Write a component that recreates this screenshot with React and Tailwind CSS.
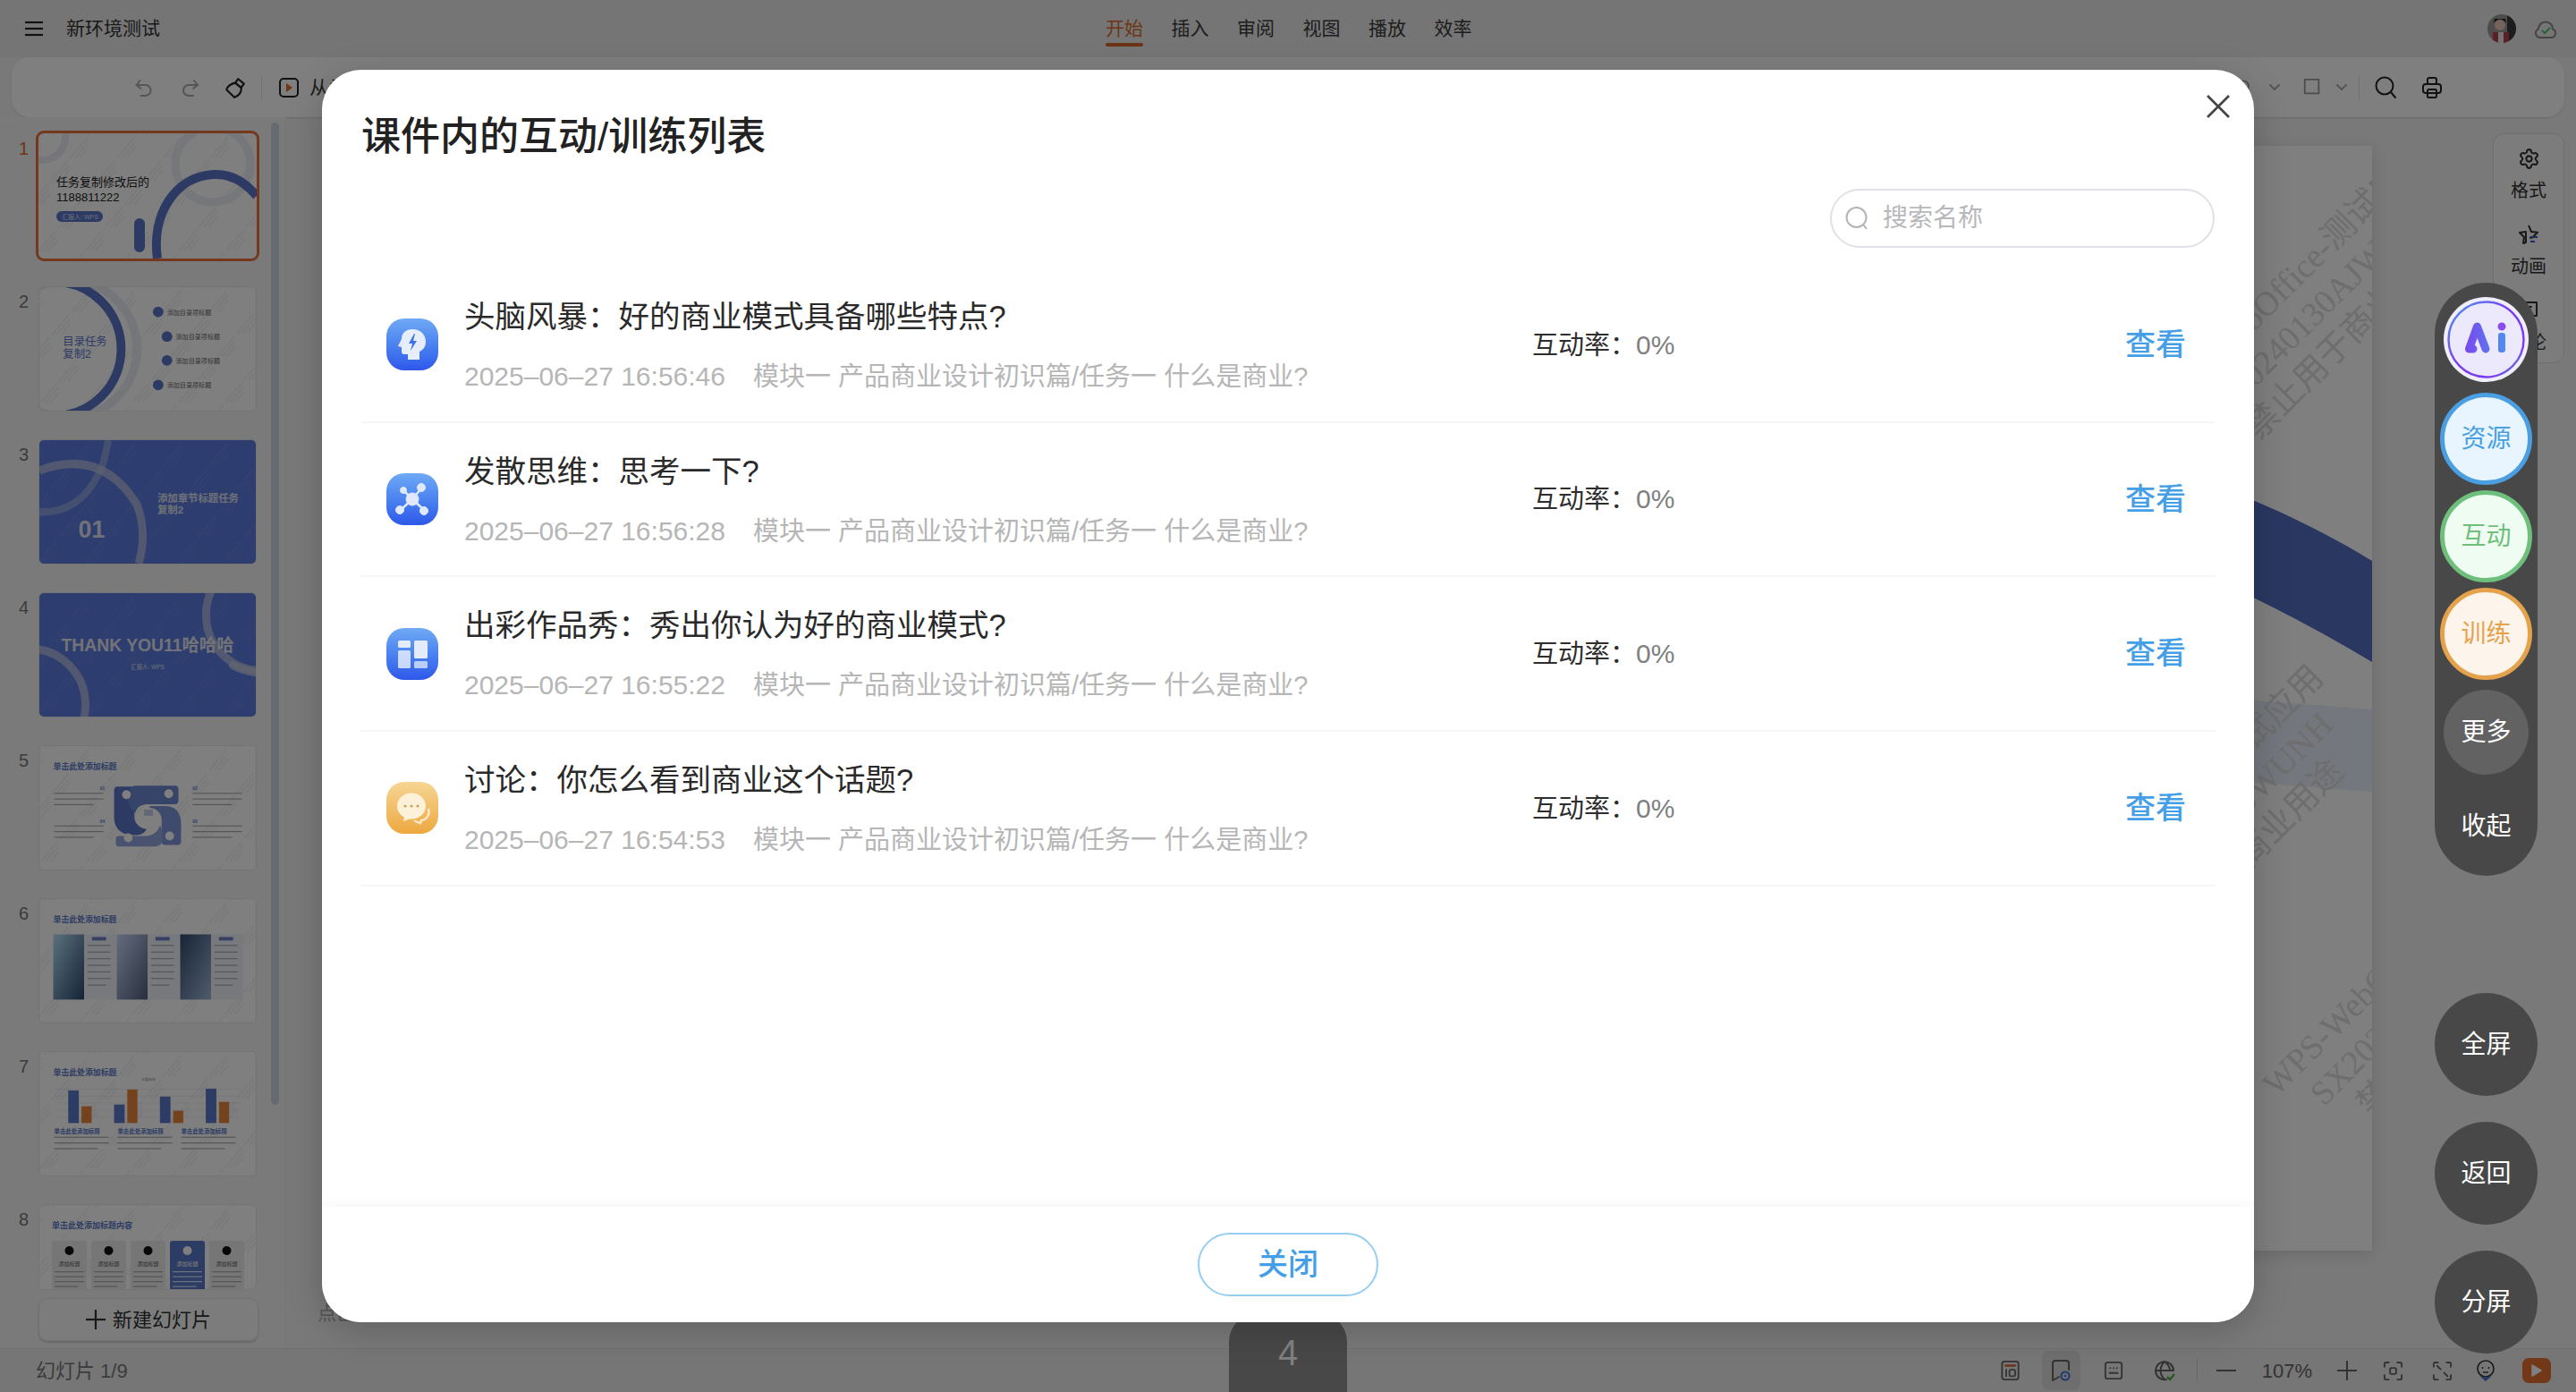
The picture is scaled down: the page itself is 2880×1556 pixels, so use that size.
import React from "react";
import { Settings } from "lucide-react";

const FONT = "font-['Liberation_Sans','Noto_Sans_CJK_SC',sans-serif]";
const SERIF = "font-['Liberation_Serif','Noto_Sans_CJK_SC',serif]";

/* ---------- Thumbnails ---------- */
function Wm({ id, color = "#dcdee6" }) {
  return (
    <>
      <defs>
        <pattern id={id} width="34" height="40" patternUnits="userSpaceOnUse" patternTransform="rotate(-50)">
          <g stroke={color} strokeWidth="1" strokeDasharray="1.4 .7">
            <line x1="1" y1="5" x2="31" y2="5" />
            <line x1="5" y1="9" x2="27" y2="9" />
            <line x1="8" y1="13" x2="24" y2="13" />
          </g>
        </pattern>
      </defs>
      <rect width="244" height="140" fill={`url(#${id})`} />
    </>
  );
}

const CN = "'Liberation Sans','Noto Sans CJK SC',sans-serif";

function Lines({ x, y, w, n, gap = 5, color = "#aaa", h = 1.2 }) {
  return (
    <g fill={color}>
      {Array.from({ length: n }).map((_, i) => (
        <rect key={i} x={x} y={y + i * gap} width={i === n - 1 ? w * 0.8 : w} height={h} />
      ))}
    </g>
  );
}

function Title({ text }) {
  return (
    <text x="15" y="26" fontSize="9" fontWeight="700" fill="#5a78c8" fontFamily={CN}>{text}</text>
  );
}

function S1() {
  return (
    <svg viewBox="0 0 244 140" className="block w-full h-full">
      <rect width="244" height="140" fill="#fff" />
      <Wm id="w1" />
      <circle cx="4" cy="4" r="26" fill="none" stroke="#ebedf3" strokeWidth="8" />
      <circle cx="195" cy="35" r="42" fill="none" stroke="#eceef4" strokeWidth="9" />
      <path d="M133 140 C126 92 152 48 196 46 C218 45 234 58 244 70" fill="none" stroke="#5a76c9" strokeWidth="10" />
      <rect x="107" y="95" width="12" height="38" rx="6" fill="#5a76c9" />
      <text x="20" y="59" fontSize="13" fill="#222" fontFamily={CN}>任务复制修改后的</text>
      <text x="20" y="76" fontSize="13" fill="#222" fontFamily={CN}>1188811222</text>
      <rect x="20" y="87" width="52" height="12" rx="6" fill="#5a76c9" />
      <text x="26" y="96" fontSize="7" fill="#d8def0" fontFamily={CN}>汇报人: WPS</text>
    </svg>
  );
}

function S2() {
  const items = [[134, 28], [144, 56], [144, 83], [134, 111]];
  return (
    <svg viewBox="0 0 244 140" className="block w-full h-full">
      <rect width="244" height="140" fill="#fff" />
      <Wm id="w2" />
      <circle cx="32" cy="70" r="78" fill="none" stroke="#ebedf3" strokeWidth="10" />
      <circle cx="16" cy="70" r="76" fill="none" stroke="#5a76c9" strokeWidth="10" />
      <text x="26" y="66" fontSize="12.5" fill="#5a76c9" fontFamily={CN}>目录任务</text>
      <text x="26" y="80" fontSize="12.5" fill="#5a76c9" fontFamily={CN}>复制2</text>
      {items.map(([x, y], i) => (
        <g key={i}>
          <circle cx={x} cy={y} r="6" fill="#5a76c9" />
          <text x={x + 10} y={y + 3} fontSize="7.2" fill="#666" fontFamily={CN}>添加目录项标题</text>
        </g>
      ))}
    </svg>
  );
}

function S3() {
  return (
    <svg viewBox="0 0 244 134" className="block w-full h-full" preserveAspectRatio="none">
      <rect width="244" height="134" fill="#5c7ade" />
      <Wm id="w3" color="#6f8be2" />
      <path d="M0 78 Q50 80 72 25 L78 0" fill="none" stroke="#aab6dd" strokeWidth="8" opacity=".6" />
      <path d="M0 33 Q70 8 110 70 Q122 100 112 134" fill="none" stroke="#c0c8e0" strokeWidth="9" opacity=".7" />
      <text x="44" y="106" fontSize="27" fontWeight="700" fill="#e2e5ee" fontFamily={CN}>01</text>
      <text x="133" y="67" fontSize="11.5" fontWeight="700" fill="#dfe3ee" fontFamily={CN}>添加章节标题任务</text>
      <text x="133" y="80" fontSize="11.5" fontWeight="700" fill="#dfe3ee" fontFamily={CN}>复制2</text>
    </svg>
  );
}

function S4() {
  return (
    <svg viewBox="0 0 244 137" className="block w-full h-full" preserveAspectRatio="none">
      <rect width="244" height="137" fill="#5c7ade" />
      <Wm id="w4" color="#6f8be2" />
      <circle cx="-10" cy="124" r="62" fill="none" stroke="#c0c8e0" strokeWidth="9" opacity=".7" />
      <circle cx="250" cy="24" r="62" fill="none" stroke="#c0c8e0" strokeWidth="9" opacity=".7" />
      <path d="M218 80 Q230 86 244 88" stroke="#c0c8e0" strokeWidth="9" fill="none" strokeLinecap="round" opacity=".8" />
      <text x="122" y="65" textAnchor="middle" fontSize="19.5" fontWeight="700" fill="#e4e6ee" fontFamily={CN}>THANK YOU11哈哈哈</text>
      <text x="122" y="84" textAnchor="middle" fontSize="6.5" fill="#dfe3ee" fontFamily={CN}>汇报人: WPS</text>
    </svg>
  );
}

function S5() {
  return (
    <svg viewBox="0 0 244 140" className="block w-full h-full">
      <rect width="244" height="140" fill="#fff" />
      <Wm id="w5" />
      <Title text="单击此处添加标题" />
      <text x="68" y="50" fontSize="5" fill="#5a76c9" fontWeight="700">01</text>
      <text x="173" y="50" fontSize="5" fill="#5a76c9" fontWeight="700">02</text>
      <text x="68" y="87" fontSize="5" fill="#5a76c9" fontWeight="700">04</text>
      <text x="173" y="87" fontSize="5" fill="#5a76c9" fontWeight="700">03</text>
      <Lines x={16} y={53} w={56} n={3} gap={6.4} />
      <Lines x={16} y={90} w={56} n={3} gap={6.4} />
      <Lines x={173} y={53} w={56} n={3} gap={6.4} />
      <Lines x={173} y={90} w={56} n={3} gap={6.4} />
      <path d="M88 46 h15 a4 4 0 0 1 4 4 v30 a14 14 0 0 0 14 14 c-4 7 -10 7 -16 7 c-14 0 -21 -9 -21 -20 v-31 a4 4 0 0 1 4 -4z" fill="#5a76c9" />
      <path d="M108 45 h45 a4 4 0 0 1 4 4 v13 a4 4 0 0 1 -4 4 h-30 c-7 0 -13 2 -15 10 c-6 -6 -9 -14 -8 -20 c1 -7 4 -11 8 -11z" fill="#6f88d2" />
      <path d="M125 68 h17 c15 0 18 12 18 20 v20 a4 4 0 0 1 -4 4 h-14 a4 4 0 0 1 -4 -4 v-24 a14 14 0 0 0 -14 -14z" fill="#7f96d8" />
      <path d="M90 102 h28 c10 0 15 -4 18 -12 c4 8 4 14 2 20 c-3 4 -8 4 -14 4 h-34 a4 4 0 0 1 -4 -4 v-4 a4 4 0 0 1 4 -4z" fill="#92a6de" />
      <circle cx="98" cy="55" r="5" fill="#fff" /><circle cx="146" cy="54" r="5" fill="#fff" />
      <circle cx="100" cy="104" r="5" fill="#fff" /><circle cx="147" cy="102" r="5" fill="#fff" />
      <rect x="118" y="72" width="10" height="7" fill="#c4d0ee" />
    </svg>
  );
}

function S6() {
  const col = (x, a, b) => (
    <g>
      <linearGradient id={`g${x}`} x1="0" y1="0" x2="1" y2="1">
        <stop offset="0" stopColor={a} /><stop offset="1" stopColor={b} />
      </linearGradient>
      <rect x={x} y="40" width="35" height="74" fill={`url(#g${x})`} />
      <rect x={x + 35} y="40" width="36" height="74" fill="#eef2fa" />
      <rect x={x + 44} y="43" width="16" height="4" fill="#6a80c8" />
      <Lines x={x + 39} y={52} w={26} n={7} gap={7.5} />
    </g>
  );
  return (
    <svg viewBox="0 0 244 140" className="block w-full h-full">
      <rect width="244" height="140" fill="#fff" />
      <Wm id="w6" />
      <Title text="单击此处添加标题" />
      {col(15, "#b8e0f8", "#26486e")}
      {col(87, "#c8d8fa", "#506080")}
      {col(159, "#304a6e", "#a0b8d8")}
    </svg>
  );
}

function S7() {
  const bars = [[32, 37, 19], [84, 21, 38], [136, 30, 14], [188, 39, 24]];
  return (
    <svg viewBox="0 0 244 140" className="block w-full h-full">
      <rect width="244" height="140" fill="#fff" />
      <Wm id="w7" />
      <Title text="单击此处添加标题" />
      <g stroke="#e8e8e8" strokeWidth=".6">
        {[42, 50, 58, 66, 74].map((y) => <line key={y} x1="18" y1={y} x2="228" y2={y} />)}
      </g>
      {bars.map(([x, a, b], i) => (
        <g key={i}>
          <rect x={x} y={68.5 - a + 12} width="12" height={a} fill="#5a78c8" />
          <rect x={x + 15} y={68.5 - b + 12} width="11.5" height={b} fill="#e8843a" />
        </g>
      ))}
      <text x="115" y="32" fontSize="4" fill="#888" fontFamily={CN}>主要标题</text>
      {[16, 88, 160].map((x) => (
        <g key={x}>
          <text x={x} y="92" fontSize="6.5" fontWeight="700" fill="#5a78c8" fontFamily={CN}>单击此处添加标题</text>
          <Lines x={x} y={96} w={62} n={3} gap={6.5} />
        </g>
      ))}
    </svg>
  );
}

function S8() {
  return (
    <svg viewBox="0 0 244 96" className="block w-full" style={{ height: 96 }} preserveAspectRatio="xMidYMin slice">
      <rect width="244" height="96" fill="#fff" />
      <Wm id="w8" />
      <Title text="单击此处添加标题内容" />
      {[15, 59, 103, 147, 191].map((x, i) => (
        <g key={x}>
          <rect x={x} y="40" width="39" height="60" rx="3" fill={i === 3 ? "#5a78c8" : "#ececee"} />
          <circle cx={x + 19.5} cy="51" r="5" fill={i === 3 ? "#fff" : "#111"} />
          <text x={x + 19.5} y="68" textAnchor="middle" fontSize="6" fill={i === 3 ? "#fff" : "#555"} fontFamily={CN}>添加标题</text>
          <Lines x={x + 3} y={74} w={33} n={4} gap={5.5} color={i === 3 ? "#dfe6f8" : "#aaa"} />
        </g>
      ))}
    </svg>
  );
}

function Thumb({ n, active, h = "h-[140px]", children }) {
  return (
    <div className="flex items-start shrink-0">
      <div className={`w-[32px] pt-[5px] text-right text-[20px] leading-[24px] ${active ? "text-[#e0682c]" : "text-[#777]"}`}>{n}</div>
      <div className={`ml-[11px] w-[244px] ${h} overflow-hidden rounded-[6px] ${active ? "outline-[3px] outline-[#e8703a]" : "border border-[#e8e8e8]"}`}>
        {children}
      </div>
    </div>
  );
}

/* ---------- Small icons ---------- */
const Ico = ({ w = 24, h = 24, vb = "0 0 24 24", c = "#555", sw = 2, children, className = "" }) => (
  <svg width={w} height={h} viewBox={vb} fill="none" stroke={c} strokeWidth={sw} strokeLinecap="round" strokeLinejoin="round" className={`shrink-0 ${className}`}>
    {children}
  </svg>
);

function ListIcon({ kind }) {
  const orange = kind === "chat";
  return (
    <div className={`w-[58px] h-[58px] shrink-0 rounded-[20px] ${orange ? "bg-gradient-to-b from-[#f6d592] to-[#eda83c]" : "bg-gradient-to-b from-[#6fa9f5] to-[#2f57ea]"}`}>
      <svg width="58" height="58" viewBox="0 0 58 58">
        {kind === "brain" && (
          <g>
            <path d="M29 12 c9 0 15 6 15 14 c0 6 -3 9 -7 11 v9 h-13 v-6 h-4 c-2 0 -3 -1 -3 -3 v-5 l-4 -1 l4 -8 c0 -7 5 -11 12 -11z" fill="#e6eefc" />
            <path d="M31 17 l-6 11 h4 l-2 8 l7 -11 h-4 l2 -8z" fill="#3f73ea" />
          </g>
        )}
        {kind === "net" && (
          <g fill="#dfe9fb" stroke="#dfe9fb">
            <line x1="29" y1="29" x2="19" y2="19" strokeWidth="2.5" />
            <line x1="29" y1="29" x2="39" y2="17" strokeWidth="2.5" />
            <line x1="29" y1="29" x2="16" y2="41" strokeWidth="2.5" />
            <line x1="29" y1="29" x2="42" y2="41" strokeWidth="2.5" />
            <circle cx="29" cy="29" r="7" />
            <circle cx="19" cy="19" r="3.5" />
            <circle cx="39" cy="16" r="4.5" />
            <circle cx="15" cy="41" r="4.5" />
            <circle cx="42" cy="42" r="4.5" />
          </g>
        )}
        {kind === "grid" && (
          <g fill="#e4ecfb">
            <rect x="13" y="14" width="14" height="8" rx="1.5" />
            <rect x="13" y="25" width="14" height="20" rx="1.5" opacity=".85" />
            <rect x="31" y="14" width="15" height="20" rx="1.5" />
            <rect x="31" y="37" width="15" height="8" rx="1.5" opacity=".75" />
          </g>
        )}
        {kind === "chat" && (
          <g>
            <path d="M47 30 c2 5 -1 12 -8 13 l-1 3 c-3 -1 -5 -1 -7 -3" fill="none" stroke="#fbeac8" strokeWidth="2.4" />
            <ellipse cx="28" cy="27" rx="16" ry="14.5" fill="#fdf1da" />
            <path d="M20 38 l-1 6 l8 -3z" fill="#fdf1da" />
            <g fill="#c9a261"><circle cx="21" cy="27" r="1.6" /><circle cx="28" cy="27" r="1.6" /><circle cx="35" cy="27" r="1.6" /></g>
          </g>
        )}
      </svg>
    </div>
  );
}

const ROWS = [
  ["brain", "头脑风暴：好的商业模式具备哪些特点?", "2025–06–27 16:56:46"],
  ["net", "发散思维：思考一下?", "2025–06–27 16:56:28"],
  ["grid", "出彩作品秀：秀出你认为好的商业模式?", "2025–06–27 16:55:22"],
  ["chat", "讨论：你怎么看到商业这个话题?", "2025–06–27 16:54:53"],
];

function Round({ border, bg, text, children }) {
  return (
    <div className={`w-[103px] h-[103px] rounded-full border-[5px] flex items-center justify-center text-[28px] shrink-0 ${border} ${bg} ${text}`}>
      {children}
    </div>
  );
}

function Dark({ children }) {
  return (
    <div className="w-[115px] h-[115px] rounded-full bg-[#484848] text-white text-[28px] flex items-center justify-center">
      {children}
    </div>
  );
}

function Watermark({ left, top }) {
  return (
    <div className={`absolute ${left} ${top} -translate-x-1/2 -translate-y-1/2 -rotate-45 text-center text-[38px] leading-[45px] text-[#dcdcdc] whitespace-nowrap ${SERIF}`}>
      <div>WPS-WebOffice-测试应用</div>
      <div>SX20240130AJWUNH</div>
      <div>禁止用于商业用途</div>
    </div>
  );
}

export default function App() {
  return (
    <div className={`relative w-[2880px] h-[1556px] overflow-hidden flex flex-col bg-[#f2f2f2] ${FONT}`}>
      {/* top bar */}
      <header className="relative h-[64px] shrink-0 bg-[#ebebeb] flex items-center">
        <svg width="20" height="18" viewBox="0 0 20 18" className="ml-[28px] shrink-0" stroke="#222" strokeWidth="2.2">
          <line x1="0" y1="2" x2="20" y2="2" /><line x1="0" y1="9" x2="20" y2="9" /><line x1="0" y1="16" x2="20" y2="16" />
        </svg>
        <span className="ml-[26px] text-[21px] text-[#333]">新环境测试</span>
        <nav className="ml-[1057px] flex gap-[31.5px] text-[21px] text-[#3a3a3a]">
          <span className="relative text-[#dc6a30]">
            开始
            <span className="absolute left-0 right-0 top-[32px] h-[4px] rounded-full bg-[#d8682e]" />
          </span>
          {["插入", "审阅", "视图", "播放", "效率"].map((t) => <span key={t}>{t}</span>)}
        </nav>
        <div className="ml-auto mr-[22px] flex items-center gap-[21px]">
          <svg width="32" height="32" viewBox="0 0 32 32">
            <defs><clipPath id="av"><circle cx="16" cy="16" r="16" /></clipPath></defs>
            <g clipPath="url(#av)">
              <rect width="32" height="32" fill="#9a9a9a" />
              <rect x="22" y="0" width="10" height="32" fill="#3a3a3a" />
              <circle cx="14" cy="12" r="6" fill="#e8c8b8" />
              <path d="M7 10 q7 -9 14 0 l-1 -5 h-12z" fill="#222" />
              <rect x="6" y="20" width="18" height="12" fill="#b8404e" />
              <rect x="12" y="20" width="6" height="12" fill="#e8e8f0" />
            </g>
          </svg>
          <svg width="24" height="22" viewBox="0 0 24 22" fill="none">
            <path d="M6 21 h12 a5 5 0 0 0 2 -9.6 a8 8 0 0 0 -16 0 a5 5 0 0 0 2 9.6z" stroke="#888" strokeWidth="2" />
            <path d="M8 13 l3 3 l6 -6" stroke="#4cc35e" strokeWidth="2" />
          </svg>
        </div>
      </header>

      {/* toolbar */}
      <div className="mx-[13px] h-[67px] shrink-0 rounded-[20px] bg-white shadow-[0_1px_2px_rgba(0,0,0,.12)] flex items-center pl-[135px] pr-[136px]">
        <Ico w={25} h={24} c="#aaa"><path d="M4 9 l4 -5 M4 9 l5 4 M4 9 h10 a6 6 0 0 1 0 12 h-5" /></Ico>
        <Ico w={24} h={24} c="#aaa" className="ml-[28px]"><path d="M20 9 l-4 -5 M20 9 l-5 4 M20 9 h-10 a6 6 0 0 0 0 12 h5" /></Ico>
        <Ico w={26} h={26} c="#222" className="ml-[25px]">
          <path d="M15 3 l6 5 l-3 4 l-6 -5z" />
          <path d="M12 7 l6 5 c1 5 -3 9 -7 10 l-8 -8 c1 -4 5 -6 9 -7z" />
        </Ico>
        <div className="ml-[16px] w-px h-[26px] bg-[#e0e0e0]" />
        <svg width="24" height="24" viewBox="0 0 24 24" className="ml-[18px] shrink-0" fill="none">
          <rect x="2" y="2" width="20" height="20" rx="4" stroke="#222" strokeWidth="2" />
          <path d="M9 7 l7 5 l-7 5z" fill="#e0682c" />
        </svg>
        <span className="ml-[11px] text-[21px] text-[#333]">从头开始</span>
        <div className="ml-auto flex items-center">
          <Ico w={20} h={20} c="#999" sw={2}><circle cx="5" cy="10" r="7" /></Ico>
          <Ico w={12} h={8} vb="0 0 12 8" c="#aaa" className="ml-[13px]"><path d="M1 1 l5 5 l5 -5" /></Ico>
          <Ico w={22} h={22} c="#999" className="ml-[25px]"><rect x="3" y="2" width="17" height="17" /></Ico>
          <Ico w={12} h={8} vb="0 0 12 8" c="#aaa" className="ml-[16px]"><path d="M1 1 l5 5 l5 -5" /></Ico>
          <div className="ml-[13px] w-px h-[26px] bg-[#e0e0e0]" />
          <Ico w={24} h={26} c="#222" sw={2} vb="0 0 24 26" className="ml-[17px]"><circle cx="11" cy="11" r="9.5" /><path d="M18 18 l5 6" /></Ico>
          <Ico w={24} h={26} c="#222" sw={2} vb="0 0 24 26" className="ml-[28px]">
            <rect x="7" y="2" width="10" height="7" rx="2" />
            <rect x="2" y="9" width="20" height="10" rx="3" />
            <rect x="7" y="15" width="10" height="9" rx="1.5" />
          </Ico>
        </div>
      </div>

      {/* main */}
      <div className="flex-1 min-h-0 flex">
        {/* slides panel */}
        <aside className="relative w-[320px] shrink-0 border-r border-[#ebebeb] bg-[#f4f4f4] flex flex-col">
          <div className="h-[1311px] overflow-hidden pt-[18px] flex flex-col gap-[31px]">
            <Thumb n="1" active><S1 /></Thumb>
            <Thumb n="2"><S2 /></Thumb>
            <Thumb n="3"><S3 /></Thumb>
            <Thumb n="4"><S4 /></Thumb>
            <Thumb n="5"><S5 /></Thumb>
            <Thumb n="6"><S6 /></Thumb>
            <Thumb n="7"><S7 /></Thumb>
            <Thumb n="8" h="h-[96px]"><S8 /></Thumb>
          </div>
          <button className="ml-[43px] mt-[9px] w-[246px] h-[48px] rounded-[10px] bg-[#f8f8f8] border border-[#e4e4e4] shadow-[0_2px_2px_rgba(0,0,0,.14)] flex items-center justify-center gap-[8px] text-[22px] text-[#333]">
            <svg width="22" height="22" viewBox="0 0 22 22" stroke="#333" strokeWidth="2.2"><line x1="11" y1="0" x2="11" y2="22" /><line x1="0" y1="11" x2="22" y2="11" /></svg>
            新建幻灯片
          </button>
          <div className="absolute left-[303px] top-[6px] w-[9px] h-[1098px] rounded-full bg-[#ccd4e2]" />
        </aside>

        {/* canvas */}
        <main className="flex-1 min-w-0 flex flex-col">
          <div className="h-[1298px] shrink-0 flex items-center justify-center">
            <div className="relative w-[2196px] h-[1235px] shrink-0 bg-white overflow-hidden shadow-[0_4px_16px_rgba(0,0,0,.12)]">
              <svg width="2196" height="1235" viewBox="0 0 2196 1235" className="block">
                <path d="M1900 340 C1980 360 2100 405 2196 464 V577 C2100 520 1990 465 1900 440 Z" fill="#546ec2" />
                <path d="M2040 618 L2196 630 V722 L2040 710 Z" fill="#e8eefa" />
              </svg>
              <Watermark left="left-[2136px]" top="top-[182px]" />
              <Watermark left="left-[2018px]" top="top-[768px]" />
              <Watermark left="left-[2261px]" top="top-[938px]" />
            </div>
          </div>
          <div className="flex-1 flex items-center pl-[35px] text-[21px] text-[#aaa]">点击此处添加备注</div>
        </main>

        {/* right rail */}
        <div className="w-[93px] shrink-0 pt-[18px]">
          <div className="w-[80px] h-[257px] rounded-[12px] border border-[#dcdcdc] bg-[#f8f8f8] pt-[15px] flex flex-col items-center text-[20px] leading-[20px] text-[#333]">
            <Settings size={25} color="#333" strokeWidth={2} className="shrink-0" />
            <div className="mt-[13px]">格式</div>
            <svg width="24" height="24" viewBox="0 0 24 24" fill="none" className="mt-[27px]">
              <path d="M12 2 l3 7 l7 .8 l-5 5 l-1 1 h-3 M9 21 l-3 1 l1 -7 l-5 -5 l7 -1z" stroke="#333" strokeWidth="2" strokeLinejoin="round" />
              <rect x="14" y="14" width="8" height="2" fill="#3c5cc0" /><rect x="14" y="19" width="5" height="2" fill="#3c5cc0" />
            </svg>
            <div className="mt-[14px]">动画</div>
            <Ico w={24} h={24} c="#333" sw={2} className="mt-[27px]">
              <path d="M3 3 h18 v15 h-6 l-3 4 l-3 -4 h-6z" />
              <path d="M8 8 h7 M8 12 h4" />
            </Ico>
            <div className="mt-[14px]">评论</div>
          </div>
        </div>
      </div>

      {/* status bar */}
      <footer className="h-[49px] shrink-0 border-t border-[#dedede] bg-[#ececec] flex items-center pl-[40px] text-[22px] text-[#777]">
        <span>幻灯片 1/9</span>
        <div className="ml-auto mr-[28px] flex items-center text-[#777]">
          <Ico w={23} h={22} c="#666"><rect x="2" y="1" width="20" height="22" rx="3" /><path d="M6 6 h12" stroke="#d8682e" strokeWidth="2.5" /><path d="M7 11 v8" /><rect x="11" y="11" width="7" height="8" rx="2" /></Ico>
          <div className="ml-[24px] w-[43px] h-[44px] rounded-[8px] bg-[#dcdcdc] flex items-center justify-center">
            <svg width="24" height="24" viewBox="0 0 24 24" fill="none">
              <path d="M10 19 l-7 4 v-19 a3 3 0 0 1 3 -3 h12 a3 3 0 0 1 3 3 v7" stroke="#666" strokeWidth="2" strokeLinecap="round" strokeLinejoin="round" />
              <circle cx="17" cy="18" r="4.5" stroke="#3f6fe0" strokeWidth="2" /><circle cx="17" cy="18" r="1.2" fill="#3f6fe0" />
            </svg>
          </div>
          <Ico w={24} h={22} c="#666" className="ml-[25px]"><rect x="2" y="2" width="20" height="20" rx="3" /><path d="M7 15 h10" /><path d="M8 9 v.01 M12 9 v.01 M16 9 v.01" /></Ico>
          <svg width="24" height="24" viewBox="0 0 24 24" fill="none" className="ml-[33px] shrink-0">
            <path d="M14 22 a10 10 0 1 1 8 -10 M2 12 h20 M12 2 c-6 6 -6 14 0 20 M12 2 c4 3 6 7 6 10" stroke="#666" strokeWidth="2" strokeLinecap="round" />
            <path d="M15 19 l3 3 l5 -6" stroke="#4cae38" strokeWidth="2.4" />
          </svg>
          <div className="ml-[24px] w-px h-[26px] bg-[#cfcfcf]" />
          <div className="ml-[21px] w-[22px] h-[2.5px] bg-[#666]" />
          <span className="ml-[29px] text-[22px] text-[#666]">107%</span>
          <svg width="22" height="22" viewBox="0 0 22 22" stroke="#666" strokeWidth="2" className="ml-[28px] shrink-0"><line x1="11" y1="0" x2="11" y2="22" /><line x1="0" y1="11" x2="22" y2="11" /></svg>
          <Ico w={23} h={23} c="#666" className="ml-[29px]"><path d="M2 7 v-3 a2 2 0 0 1 2 -2 h3 M17 2 h3 a2 2 0 0 1 2 2 v3 M22 17 v3 a2 2 0 0 1 -2 2 h-3 M7 22 h-3 a2 2 0 0 1 -2 -2 v-3" /><rect x="8.5" y="8.5" width="7" height="7" rx="1.5" /></Ico>
          <Ico w={23} h={23} c="#666" className="ml-[32px]"><path d="M2 7 v-3 a2 2 0 0 1 2 -2 h3 M17 2 h3 a2 2 0 0 1 2 2 v3 M22 17 v3 a2 2 0 0 1 -2 2 h-3 M7 22 h-3 a2 2 0 0 1 -2 -2 v-3" /><path d="M6 6 l4 4 M18 18 l-4 -4" /></Ico>
          <svg width="24" height="26" viewBox="0 0 24 26" fill="none" className="ml-[25px] shrink-0">
            <circle cx="12" cy="11" r="9" stroke="#333" strokeWidth="1.6" />
            <circle cx="8.5" cy="10" r="1" fill="#333" /><circle cx="15.5" cy="10" r="1" fill="#333" />
            <path d="M9 15 h6" stroke="#333" strokeWidth="1.4" />
            <path d="M5 19 l7 6 l7 -6 l-7 2z" fill="#4a70d0" />
          </svg>
          <div className="ml-[29px] w-[32px] h-[28px] rounded-[7px] bg-[#e4702e] flex items-center justify-center">
            <svg width="12" height="14" viewBox="0 0 12 14"><path d="M1 1 l10 6 l-10 6z" fill="#fff" stroke="#fff" strokeLinejoin="round" strokeWidth="1.5" /></svg>
          </div>
        </div>
      </footer>

      {/* dim layer + dialog */}
      <div className="absolute inset-0 bg-black/50 flex items-center justify-center">
        <div className="absolute left-[1374px] top-[1468px] w-[132px] h-[88px] rounded-t-[32px] bg-[#484848] text-[#808080] text-[40px] leading-[88px] text-center">4</div>

        <section className="relative w-[2160px] h-[1400px] bg-white rounded-[44px] flex flex-col shadow-[0_8px_40px_rgba(0,0,0,.2)]">
          <h2 className="pt-[45px] pl-[44px] text-[44px] leading-[60px] font-medium text-[#222]">课件内的互动/训练列表</h2>
          <button className="absolute right-[27px] top-[28px]" aria-label="关闭">
            <svg width="26" height="26" viewBox="0 0 26 26" stroke="#444" strokeWidth="2.6" className="block"><line x1="1" y1="1" x2="25" y2="25" /><line x1="25" y1="1" x2="1" y2="25" /></svg>
          </button>

          <div className="self-end mr-[44px] mt-[28px] w-[430px] h-[66px] rounded-full border-2 border-[#e0e0e6] flex items-center pl-[15px]">
            <svg width="26" height="26" viewBox="0 0 26 26" fill="none" stroke="#b4b4b8" strokeWidth="2"><circle cx="12.5" cy="12" r="11" /><path d="M20 20 l4 5" /></svg>
            <span className="ml-[16px] text-[28px] text-[#b8b8bc]">搜索名称</span>
          </div>

          <div className="mt-[23px] mx-[43px] flex-1">
            {ROWS.map(([kind, title, time]) => (
              <div key={time} className="h-[172.7px] border-b-2 border-[#f6f6f6] flex items-center pl-[29px] pr-[33px]">
                <ListIcon kind={kind} />
                <div className="ml-[30px] w-[1193px] shrink-0 pt-[4px]">
                  <div className="text-[34.5px] leading-[40px] text-[#2a2a2a] -ml-[1px]">{title}</div>
                  <div className="mt-[27px] text-[30px] leading-[40px] text-[#b6b6b6] whitespace-nowrap flex">
                    <span className="w-[323px] -ml-[1px] shrink-0">{time}</span>
                    <span className="text-[29px]">模块一 产品商业设计初识篇/任务一 什么是商业?</span>
                  </div>
                </div>
                <div className="text-[29px] text-[#2e2e2e]">互动率：<span className="text-[#808080] text-[30px]">0%</span></div>
                <button className="ml-auto text-[34px] font-medium text-[#459fe6]">查看</button>
              </div>
            ))}
          </div>

          <div className="h-[129px] shrink-0 rounded-b-[44px] bg-white shadow-[0_-6px_10px_rgba(0,0,0,.025)] flex items-center justify-center">
            <button className="w-[202px] h-[71px] rounded-full border-2 border-[#96cdf3] text-[34px] font-medium text-[#459fe6]">关闭</button>
          </div>
        </section>

        {/* floating tool pill */}
        <div className="absolute left-[2722px] top-[316px] w-[115px] h-[663px] rounded-full bg-[#484848] flex flex-col items-center pt-[16px] text-[28px]">
          <svg width="95" height="95" viewBox="0 0 95 95" className="shrink-0">
            <defs>
              <linearGradient id="ring" x1="0" y1="0" x2="1" y2="1">
                <stop offset="0" stopColor="#4a9fe8" /><stop offset=".45" stopColor="#7a3cf0" /><stop offset=".8" stopColor="#7a3cf0" /><stop offset="1" stopColor="#3cc0c0" />
              </linearGradient>
              <linearGradient id="ai" gradientUnits="userSpaceOnUse" x1="24" y1="0" x2="70" y2="0">
                <stop offset="0" stopColor="#7a48ee" /><stop offset="1" stopColor="#4f8ff0" />
              </linearGradient>
            </defs>
            <circle cx="47.5" cy="47.5" r="47.5" fill="#f1eefb" />
            <circle cx="47.5" cy="47.5" r="42" fill="#ece9fc" stroke="url(#ring)" strokeWidth="2.4" />
            <path d="M28.5 58 L37.5 33 L47 58 M28.5 58 H33" fill="none" stroke="url(#ai)" strokeWidth="9" strokeLinecap="round" strokeLinejoin="round" />
            <circle cx="65" cy="33" r="4.5" fill="#8a4cf0" />
            <rect x="61" y="40" width="8" height="22" rx="3" fill="url(#ai)" />
          </svg>
          <div className="mt-[12px] flex flex-col items-center gap-[6px]">
            <Round border="border-[#4a9fe3]" bg="bg-[#e8f5ff]" text="text-[#4a9fe3]">资源</Round>
            <Round border="border-[#6fbf7c]" bg="bg-[#effcf1]" text="text-[#6fbf7c]">互动</Round>
            <Round border="border-[#e5a24d]" bg="bg-[#fdf5ec]" text="text-[#e5a24d]">训练</Round>
          </div>
          <div className="mt-[11px] w-[95px] h-[95px] rounded-full bg-[#626262] text-white flex items-center justify-center shrink-0">更多</div>
          <div className="mt-[38px] text-white leading-[40px]">收起</div>
        </div>

        {/* view buttons */}
        <div className="absolute left-[2722px] top-[1110px] flex flex-col gap-[29px]">
          <Dark>全屏</Dark>
          <Dark>返回</Dark>
          <Dark>分屏</Dark>
        </div>
      </div>
    </div>
  );
}
